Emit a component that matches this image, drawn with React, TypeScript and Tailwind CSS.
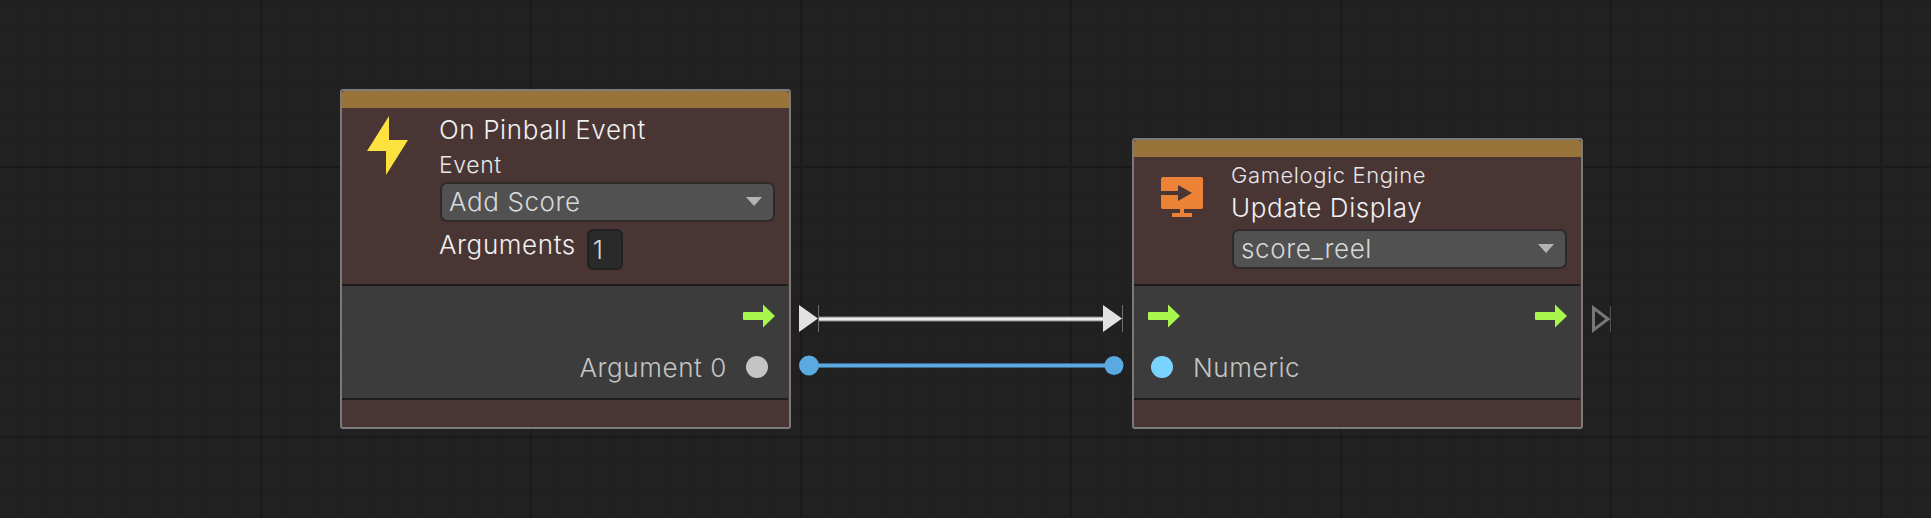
import { ReactNode } from 'react';

function ExecArrow() {
  return (
    <svg width="32" height="24" viewBox="0 0 32 24" className="block">
      <path d="M1 8H20V0.5L32 12L20 23.5V16H1Q0 16 0 15V9Q0 8 1 8Z" fill="#a8f64e" />
    </svg>
  );
}

function BoltIcon() {
  return (
    <svg width="42" height="59" viewBox="0 0 42 59" className="block">
      <path d="M22 0V24H41L19 59V35H0Z" fill="#fde23f" />
    </svg>
  );
}

function DisplayIcon() {
  return (
    <svg width="42" height="41" viewBox="0 0 42 41" className="block">
      <path d="M2 0H40Q42 0 42 2V30Q42 32 40 32H2Q0 32 0 30V2Q0 0 2 0Z" fill="#ec8235" />
      <path d="M0 14H17V8L31 16L17 24V18H0Z" fill="#4a3535" />
      <path d="M19 32H23V36H31V40H11V36H19Z" fill="#ec8235" />
    </svg>
  );
}

function Dropdown({ value }: { value: string }) {
  return (
    <div className="flex h-[40px] w-[335px] items-center justify-between rounded-[7px] border-2 border-[#2e2a2a] bg-[#515151] pb-[1px] pl-[7px] pr-[11px] text-[26px] text-[#d8d8d8]">
      <span>{value}</span>
      <span className="h-0 w-0 border-x-[8px] border-t-[9px] border-x-transparent border-t-[#b4b4b4]" />
    </div>
  );
}

interface GraphNodeProps {
  className: string;
  icon: ReactNode;
  iconClass: string;
  children: ReactNode;
  body: ReactNode;
}

function GraphNode({ className, icon, iconClass, children, body }: GraphNodeProps) {
  return (
    <div className={`absolute flex w-[451px] flex-col overflow-hidden rounded-[3px] border-2 border-[#7b7b7b] bg-[#4a3535] ${className}`}>
      <div className="h-[17px] shrink-0 rounded-t-[3px] bg-[#98733a]" />
      <div className="mr-[1px] flex flex-1 border-b-2 border-[#1c1c1c]">
        <div className={`w-[98px] shrink-0 ${iconClass}`}>{icon}</div>
        <div className="flex min-w-0 flex-1 flex-col">{children}</div>
      </div>
      <div className="mr-[1px] h-[114px] shrink-0 border-b-2 border-[#1c1c1c] bg-[#3c3c3c]">{body}</div>
      <div className="h-[27px] shrink-0" />
    </div>
  );
}

export default function App() {
  return (
    <div
      className="relative h-[518px] w-[1931px] overflow-hidden bg-[#212121] font-['Inter',sans-serif] font-light tracking-[0.6px]
        bg-[linear-gradient(#1a1a1a_2px,transparent_2px),linear-gradient(90deg,#1a1a1a_2px,transparent_2px),linear-gradient(#1e1e1e_1px,transparent_1px),linear-gradient(90deg,#1e1e1e_1px,transparent_1px)]
        bg-[size:270px_270px,270px_270px,27px_27px,27px_27px]
        bg-[position:0_166px,260px_0,0_4px,17px_0]"
    >
      {/* Wires and ports */}
      <svg width="1931" height="518" className="absolute inset-0">
        <path d="M818 319H1106" stroke="#858585" strokeWidth="5" />
        <path d="M818 319H1106" stroke="#ececec" strokeWidth="3" />
        <path d="M809 365.5H1114" stroke="#3d6a8c" strokeWidth="5" />
        <path d="M809 365.5H1114" stroke="#5aa9e0" strokeWidth="3" />
        <path d="M799 305L818 318.5L799 332Z" fill="#e2e2e2" />
        <path d="M818.5 305V332" stroke="#6d6d6d" />
        <path d="M1103 305L1122 318.5L1103 332Z" fill="#e2e2e2" />
        <path d="M1122.5 305V332" stroke="#6d6d6d" />
        <circle cx="809" cy="365.5" r="10" fill="#5aa9e0" />
        <circle cx="1114" cy="365.5" r="9.5" fill="#5aa9e0" />
        <path d="M1593.5 308L1608 319L1593.5 330Z" fill="none" stroke="#787878" strokeWidth="3" />
        <path d="M1610.5 306V332" stroke="#555555" />
      </svg>

      <GraphNode
        className="left-[340px] top-[89px] h-[340px]"
        icon={<BoltIcon />}
        iconClass="pl-[25px] pt-[8px]"
        body={
          <div className="flex h-full flex-col">
            <div className="flex h-[42px] items-end justify-end pr-[13px]">
              <ExecArrow />
            </div>
            <div className="mt-[18px] flex items-center justify-end gap-[19px] pr-[20px] text-[26px] leading-[39px] text-[#c4c4c4]">
              <span className="pt-[2px]">Argument 0</span>
              <span className="h-[22px] w-[22px] rounded-full bg-[#c4c4c4]" />
            </div>
          </div>
        }
      >
        <div className="-ml-px mt-[6px] text-[26px] leading-[32px] text-[#f0f0f0]">On Pinball Event</div>
        <div className="-ml-px mt-[6px] text-[23px] leading-[26px] text-[#e6e6e6]">Event</div>
        <div className="mt-[4px]"><Dropdown value="Add Score" /></div>
        <div className="-ml-px mt-[7px] flex items-start gap-[11px]">
          <span className="text-[26px] leading-[32px] text-[#f0f0f0]">Arguments</span>
          <span className="flex h-[41px] w-[36px] items-center rounded-[6px] border-2 border-[#212121] bg-[#2a2a2a] pl-[4px] text-[26px] text-[#d8d8d8]">1</span>
        </div>
      </GraphNode>

      <GraphNode
        className="left-[1132px] top-[138px] h-[291px]"
        icon={<DisplayIcon />}
        iconClass="pl-[27px] pt-[20px]"
        body={
          <div className="flex h-full flex-col">
            <div className="flex h-[42px] items-end justify-between pl-[14px] pr-[13px]">
              <ExecArrow />
              <ExecArrow />
            </div>
            <div className="mt-[18px] flex items-center gap-[20px] pl-[17px] text-[26px] leading-[39px] text-[#c4c4c4]">
              <span className="h-[22px] w-[22px] rounded-full bg-[#7ad4ff]" />
              <span className="pt-[2px]">Numeric</span>
            </div>
          </div>
        }
      >
        <div className="-ml-px mt-[5px] text-[22px] leading-[26px] text-[#e6e6e6]">Gamelogic Engine</div>
        <div className="-ml-px mt-[4px] text-[26px] leading-[32px] text-[#f0f0f0]">Update Display</div>
        <div className="mt-[5px]"><Dropdown value="score_reel" /></div>
      </GraphNode>
    </div>
  );
}
